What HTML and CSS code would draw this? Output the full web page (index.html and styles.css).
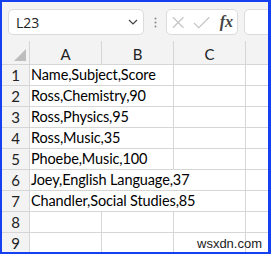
FILE: index.html
```html
<!DOCTYPE html>
<html lang="en">
<head>
  <meta charset="UTF-8">
  <title>Sheet</title>
  <link rel="stylesheet" href="styles.css">
</head>
<body>
  <div class="frame">
    <div class="toolbar">
      <div class="namebox">
        <span class="cellref">L23</span>
        <svg class="chevron" width="10" height="6" viewBox="0 0 10 6"><path d="M1 1 L5 5 L9 1" fill="none" stroke="#444" stroke-width="1.2"/></svg>
      </div>
      <svg class="grip" width="3" height="11" viewBox="0 0 3 11">
        <circle cx="1.5" cy="1.5" r="1" fill="#888"/>
        <circle cx="1.5" cy="5.5" r="1" fill="#888"/>
        <circle cx="1.5" cy="9.5" r="1" fill="#888"/>
      </svg>
      <div class="fxbox">
        <svg width="13" height="13" viewBox="0 0 13 13"><path d="M1 1 L12 12 M12 1 L1 12" stroke="#c4c4c4" stroke-width="1.2" fill="none"/></svg>
        <svg width="18" height="13" viewBox="0 0 18 13"><path d="M1 7 L6 12 L17 1" stroke="#c4c4c4" stroke-width="1.2" fill="none"/></svg>
        <span class="fx">fx</span>
      </div>
      <div class="formula"></div>
    </div>

    <div class="sheet">
      <div class="corner"><svg width="12" height="12" viewBox="0 0 12 12"><path d="M12 0 L12 12 L0 12 Z" fill="#bdbdbd"/></svg></div>
      <div class="colhead">A</div>
      <div class="colhead">B</div>
      <div class="colhead">C</div>
      <div class="colhead"></div>

      <div class="rowhead">1</div>
      <div class="cell span2">Name,Subject,Score</div>
      <div class="cell"></div>
      <div class="cell"></div>

      <div class="rowhead">2</div>
      <div class="cell span2">Ross,Chemistry,90</div>
      <div class="cell"></div>
      <div class="cell"></div>

      <div class="rowhead">3</div>
      <div class="cell span2">Ross,Physics,95</div>
      <div class="cell"></div>
      <div class="cell"></div>

      <div class="rowhead">4</div>
      <div class="cell span2">Ross,Music,35</div>
      <div class="cell"></div>
      <div class="cell"></div>

      <div class="rowhead">5</div>
      <div class="cell span2">Phoebe,Music,100</div>
      <div class="cell"></div>
      <div class="cell"></div>

      <div class="rowhead">6</div>
      <div class="cell span3">Joey,English Language,37</div>
      <div class="cell"></div>

      <div class="rowhead">7</div>
      <div class="cell span3">Chandler,Social Studies,85</div>
      <div class="cell"></div>

      <div class="rowhead">8</div>
      <div class="cell"></div>
      <div class="cell"></div>
      <div class="cell"></div>
      <div class="cell"></div>

      <div class="rowhead">9</div>
      <div class="cell"></div>
      <div class="cell"></div>
      <div class="cell"></div>
      <div class="cell"></div>
    </div>

    <div class="watermark">wsxdn.com</div>
  </div>
</body>
</html>
```

FILE: styles.css
```css
body {
  margin: 0;
  padding: 0;
  background: #ffffff;
}

.frame {
  position: relative;
  width: 271px;
  height: 254px;
  box-sizing: border-box;
  border-style: solid;
  border-color: #1440f0;
  border-width: 2px 3px 2px 2px;
  overflow: hidden;
  background: #f3f3f3;
  font-family: Lato, "Liberation Sans", sans-serif;
}

.toolbar {
  height: 39px;
  box-sizing: border-box;
  padding-top: 7px;
  display: flex;
  align-items: flex-start;
}

.namebox {
  margin-left: 6px;
  width: 136px;
  height: 26px;
  box-sizing: border-box;
  background: #fff;
  border: 1px solid #dcdcdc;
  border-radius: 5px;
  display: flex;
  align-items: center;
  justify-content: space-between;
  padding: 0 5px 0 7px;
}

.cellref {
  font-family: "Open Sans", sans-serif;
  font-size: 14px;
  color: #222;
}

.grip {
  margin: 8px 0 0 10px;
}

.fxbox {
  margin-left: 9px;
  width: 72px;
  height: 26px;
  box-sizing: border-box;
  background: #fff;
  border: 1px solid #dcdcdc;
  border-radius: 5px;
  display: flex;
  align-items: center;
  padding: 0 4px 0 5px;
  gap: 9px;
}

.fx {
  font-family: "Liberation Serif", serif;
  font-style: italic;
  font-weight: bold;
  font-size: 16px;
  color: #444;
}

.formula {
  flex: 1;
  margin-left: 6px;
  margin-right: -10px;
  height: 26px;
  box-sizing: border-box;
  background: #fff;
  border: 1px solid #dcdcdc;
  border-radius: 5px;
}

.sheet {
  display: grid;
  grid-template-columns: 27px 71px 71px 71px 1fr;
  grid-template-rows: 23px repeat(9, 20px);
  gap: 1px;
  background: #d6d6d6;
}

.corner {
  background: #f3f3f3;
  display: flex;
  align-items: flex-end;
  justify-content: flex-end;
  padding: 0 3px 3px 0;
}

.colhead {
  background: #f3f3f3;
  text-align: center;
  font-size: 15px;
  line-height: 23px;
  padding-top: 2px;
  color: #222;
}

.rowhead {
  background: #f3f3f3;
  text-align: center;
  font-size: 15px;
  line-height: 20px;
  color: #222;
}

.cell {
  background: #fff;
  font-size: 14.5px;
  letter-spacing: -0.12px;
  line-height: 20px;
  padding-left: 1px;
  color: #000;
  white-space: nowrap;
}

.span2 {
  grid-column: span 2;
}

.span3 {
  grid-column: span 3;
}

.watermark {
  position: absolute;
  left: 195px;
  top: 235px;
  font-family: "Liberation Sans", sans-serif;
  font-size: 13px;
  line-height: 14px;
  color: #222;
}
```
